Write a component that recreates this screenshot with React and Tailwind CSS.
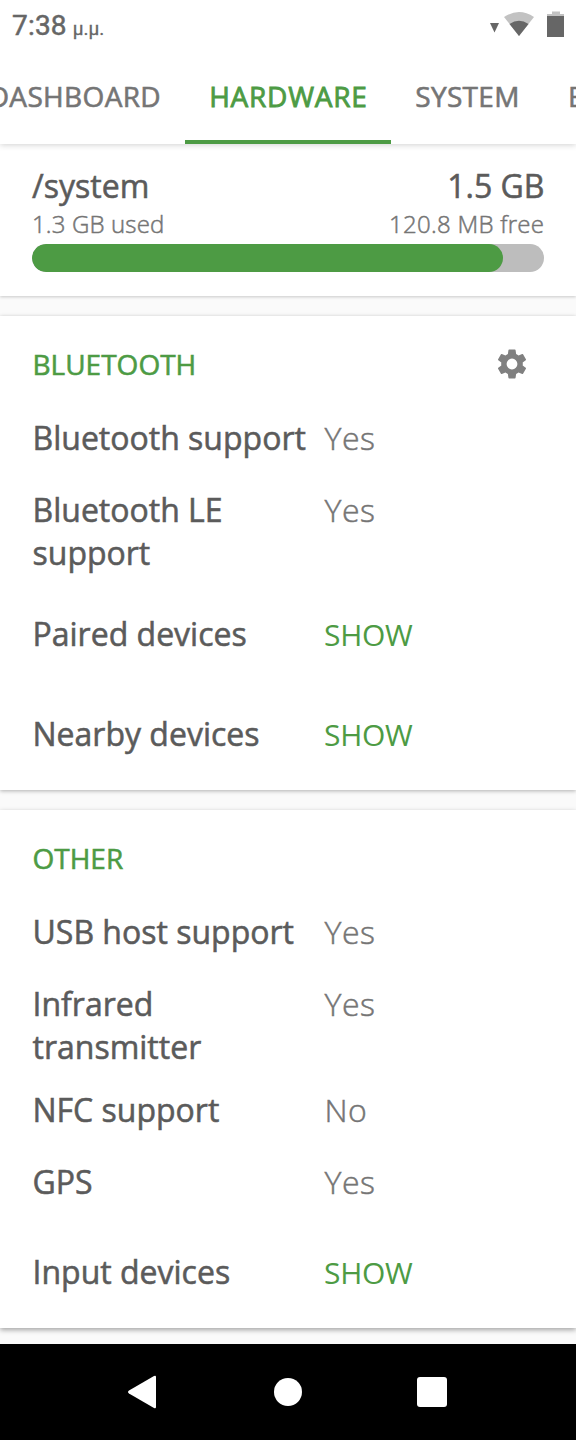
const strong = '[-webkit-text-stroke:0.55px_currentColor]';
const thin = '[-webkit-text-stroke:0.5px_currentColor]';

function Tab({ children, active, className }) {
  return (
    <div
      className={`flex h-full shrink-0 justify-center border-b-4 pt-[29px] text-[28px] leading-[38px] ${
        active
          ? 'border-[#4d9b44] tracking-[0.75px] text-[#4d9b44] [-webkit-text-stroke:0.85px_currentColor]'
          : 'border-transparent tracking-[0.35px] text-[#757575] [-webkit-text-stroke:0.6px_currentColor]'
      } ${className}`}
    >
      {children}
    </div>
  );
}

function Row({ label, value, action, className }) {
  return (
    <div className={`flex items-start leading-[43px] ${className}`}>
      <div className={`w-[292px] shrink-0 pr-4 pl-[0.5px] text-[32px] text-[#5b5b5b] ${strong}`}>{label}</div>
      {action ? (
        <button className="pt-px text-[30px] font-normal tracking-[-0.3px] text-[#4d9b44]">{action}</button>
      ) : (
        <div className={`pl-[0.5px] text-[32px] font-light tracking-[0.5px] text-[#757575] ${thin}`}>{value}</div>
      )}
    </div>
  );
}

function Card({ title, icon, className, children }) {
  return (
    <section className={`w-full bg-white px-8 ${className}`}>
      {title && (
        <div className="flex h-[96px] items-center justify-between pr-4">
          <h2 className={`pl-[0.5px] text-[28px] leading-[38px] text-[#4d9b44] ${strong}`}>{title}</h2>
          {icon}
        </div>
      )}
      {children}
    </section>
  );
}

function Gear() {
  return (
    <svg viewBox="0 0 24 24" className="size-9 translate-x-[2px] fill-[#808080]">
      <path d="M19.14 12.94c.04-.3.06-.61.06-.94 0-.32-.02-.64-.07-.94l2.03-1.58a.49.49 0 0 0 .12-.61l-1.92-3.32a.49.49 0 0 0-.59-.22l-2.39.96c-.5-.38-1.03-.7-1.62-.94l-.36-2.54a.48.48 0 0 0-.48-.41h-3.84c-.24 0-.43.17-.47.41l-.36 2.54c-.59.24-1.13.57-1.62.94l-2.39-.96a.48.48 0 0 0-.59.22L2.74 8.87c-.12.21-.08.47.12.61l2.03 1.58c-.05.3-.09.63-.09.94s.02.64.07.94l-2.03 1.58a.49.49 0 0 0-.12.61l1.92 3.32c.12.22.37.29.59.22l2.39-.96c.5.38 1.03.7 1.62.94l.36 2.54c.05.24.24.41.48.41h3.84c.24 0 .44-.17.47-.41l.36-2.54c.59-.24 1.13-.56 1.62-.94l2.39.96c.22.08.47 0 .59-.22l1.92-3.32a.48.48 0 0 0-.12-.61l-2.01-1.58zM12 15.6A3.6 3.6 0 1 1 12 8.4a3.6 3.6 0 0 1 0 7.2z" />
    </svg>
  );
}

export default function App() {
  return (
    <div className="flex h-[1440px] w-[576px] flex-col overflow-hidden bg-[#fafafa] font-['Open_Sans','Noto_Sans',sans-serif]">
      <header className="z-10 h-36 shrink-0 bg-white shadow-[0_1px_6px_rgba(0,0,0,0.18)]">
        <div className="flex h-12 items-center justify-between pr-3 pl-3 font-[Roboto,sans-serif] text-[#666]">
          <div className="flex items-baseline pt-1 font-normal [-webkit-text-stroke:0.5px_currentColor]">
            <span className="text-[28px] leading-[50px] tracking-[0.2px]">7:38</span>
            <span className="ml-[6px] text-[19px] [-webkit-text-stroke:0.3px_currentColor]">μ.μ.</span>
          </div>
          <svg viewBox="0 0 88 48" className="h-12 w-[88px]">
            <path d="M14 23h9l-4.5 9.5z" fill="#666" />
            <path d="M28 17Q43 7 58 17L43 36z" fill="#c2c2c2" />
            <path d="M33.5 24Q43 17.500 52.500 24L43 36z" fill="#666" />
            <path d="M76 11.500h8V14h4v2.500H71V14h5z" fill="#c2c2c2" />
            <path d="M71 16h17v21H71z" fill="#666" />
          </svg>
        </div>
        <nav className="flex h-24 overflow-hidden">
          <Tab className="-ml-[30px] w-[215px] justify-end pr-[24px]">DASHBOARD</Tab>
          <Tab active className="w-[206px] pl-[0.75px]">HARDWARE</Tab>
          <Tab className="w-[153px]">SYSTEM</Tab>
          <Tab className="w-[170px] justify-start pl-[24px]">BATTERY</Tab>
        </nav>
      </header>

      <main className="flex flex-1 flex-col gap-5 overflow-hidden pb-4">
        <Card className="h-[152px] shrink-0 pt-5 shadow-[0_1px_3px_rgba(0,0,0,0.2)]">
          <div className={`flex justify-between text-[32px] leading-[44px] text-[#5b5b5b] ${strong}`}>
            <span>/system</span>
            <span className="-mr-[0.5px]">1.5 GB</span>
          </div>
          <div className={`-mt-px flex justify-between text-[24px] leading-[33px] font-light text-[#757575] ${thin}`}>
            <span className="tracking-[0.15px]">1.3 GB used</span>
            <span className="-mr-[0.3px] tracking-[0.28px]">120.8 MB free</span>
          </div>
          <div className="mt-1 h-7 overflow-hidden rounded-[14px] bg-[#bdbdbd]">
            <div className="h-full w-[471px] rounded-[14px] bg-[#4d9b44]" />
          </div>
        </Card>

        <Card title="BLUETOOTH" icon={<Gear />} className="h-[474px] shrink-0 shadow-[0_1px_4px_rgba(0,0,0,0.3)]">
          <Row label="Bluetooth support" value="Yes" className="mt-[4px]" />
          <Row label="Bluetooth LE support" value="Yes" className="mt-[29px]" />
          <Row label="Paired devices" action="SHOW" className="mt-[38px]" />
          <Row label="Nearby devices" action="SHOW" className="mt-[56px]" />
        </Card>

        <Card title="OTHER" className="h-[518px] shrink-0 shadow-[0_2px_5px_rgba(0,0,0,0.35)]">
          <Row label="USB host support" value="Yes" className="mt-[4px]" />
          <Row label="Infrared transmitter" value="Yes" className="mt-[29px]" />
          <Row label="NFC support" value="No" className="mt-[20px]" />
          <Row label="GPS" value="Yes" className="mt-[29px]" />
          <Row label="Input devices" action="SHOW" className="mt-[47px]" />
        </Card>
      </main>

      <footer className="z-10 flex h-24 shrink-0 items-center justify-center bg-black">
        <svg viewBox="0 0 432 96" className="h-24 w-[432px] fill-white">
          <path d="M57 33.500L82 19Q84 18 84 20V50Q84 52 82 51L57 36.500Q55 35 57 33.500z" transform="translate(0 13)" />
          <circle cx="216" cy="48" r="14" />
          <rect x="345" y="33" width="30" height="30" rx="3" />
        </svg>
      </footer>
    </div>
  );
}
